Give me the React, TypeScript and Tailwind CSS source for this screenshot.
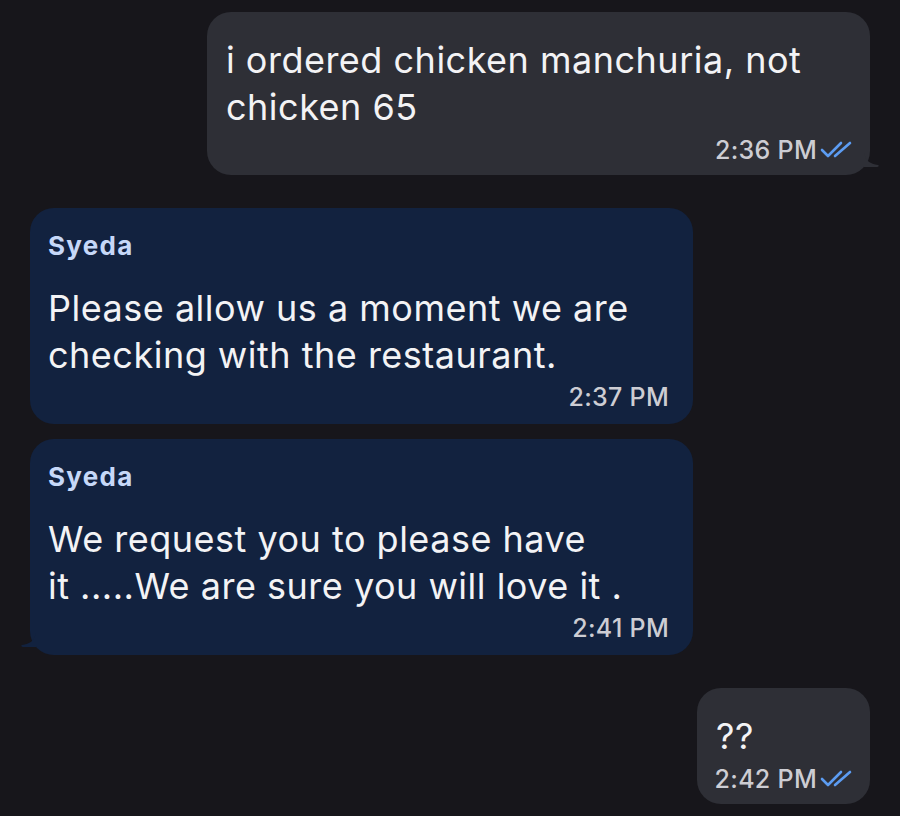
import React from "react";

const DoubleTick = () => (
  <svg width="34" height="22" viewBox="0 0 34 22" fill="none" className="ml-[3px] shrink-0">
    <path d="M2 11 L8 17 L21 4" stroke="#5c9cf2" strokeWidth="2.6" strokeLinecap="round" strokeLinejoin="round" />
    <path d="M15 17 L30 4" stroke="#5c9cf2" strokeWidth="2.6" strokeLinecap="round" />
  </svg>
);

const TailRight = () => (
  <svg width="16" height="20" viewBox="0 0 16 20" className="absolute -right-[10px] bottom-[2px]">
    <path d="M0 0 C2 8 6 11 14 12 C15 12 15 14 13 14 L0 14 Z" fill="#2e2f36" />
  </svg>
);

const TailLeft = () => (
  <svg width="16" height="20" viewBox="0 0 16 20" className="absolute -left-[10px] bottom-[2px]">
    <path d="M16 0 C14 8 10 11 2 12 C1 12 1 14 3 14 L16 14 Z" fill="#12223f" />
  </svg>
);

const Sent = ({ lines, time, width, tail }: { lines: string[]; time: string; width: string; tail?: boolean }) => (
  <div className={`relative self-end ${width} rounded-[24px] bg-[#2e2f36] pl-[19px] pr-[16px] pt-[25px] pb-[11px]`}>
    <div className="text-[36px] leading-[47px] tracking-[0.5px] text-[#f3f3f5] whitespace-nowrap">
      {lines.map((l) => (
        <div key={l}>{l}</div>
      ))}
    </div>
    <div className="mt-[5px] flex items-center justify-end whitespace-nowrap text-[25px] leading-[28px] tracking-[0.3px] font-medium text-[#cdcdd3]">
      {time}
      <DoubleTick />
    </div>
    {tail && <TailRight />}
  </div>
);

const Received = ({ lines, time, tail }: { lines: string[]; time: string; tail?: boolean }) => (
  <div className="relative self-start w-[663px] rounded-[24px] bg-[#12223f] pl-[18px] pr-[24px] pt-[22px] pb-[13px]">
    <div className="text-[26px] leading-[32px] tracking-[1.3px] font-bold text-[#c6d8f8]">Syeda</div>
    <div className="mt-[23px] text-[36px] leading-[47px] tracking-[0.5px] text-[#f3f3f5] whitespace-nowrap">
      {lines.map((l) => (
        <div key={l}>{l}</div>
      ))}
    </div>
    <div className="mt-[4px] flex justify-end whitespace-nowrap text-[25px] leading-[28px] tracking-[0.3px] font-medium text-[#cdcdd3]">{time}</div>
    {tail && <TailLeft />}
  </div>
);

export default function App() {
  return (
    <div
      className="w-[900px] h-[816px] overflow-hidden bg-[#17161b] flex flex-col px-[30px] pt-[12px]"
      style={{ fontFamily: 'Inter, "Open Sans", sans-serif' }}
    >
      <Sent width="w-[663px]" lines={["i ordered chicken manchuria, not", "chicken 65"]} time="2:36 PM" tail />
      <div className="mt-[33px] flex flex-col gap-[15px]">
        <Received lines={["Please allow us a moment we are", "checking with the restaurant."]} time="2:37 PM" />
        <Received lines={["We request you to please have", "it .....We are sure you will love it ."]} time="2:41 PM" tail />
      </div>
      <div className="mt-[33px] flex flex-col">
        <Sent width="w-[173px]" lines={["??"]} time="2:42 PM" />
      </div>
    </div>
  );
}
